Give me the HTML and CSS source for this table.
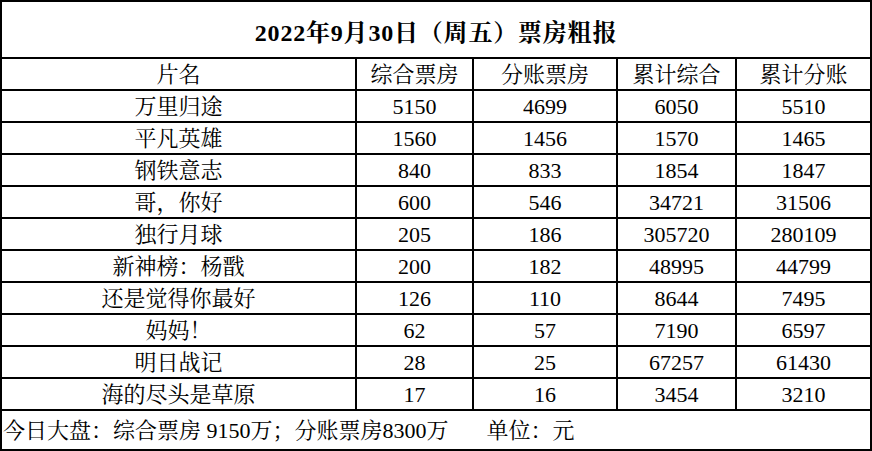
FILE: index.html
```html
<!DOCTYPE html>
<html lang="zh-CN">
<head>
<meta charset="utf-8">
<title>票房粗报</title>
<link rel="stylesheet" href="styles.css">
</head>
<body>
<div class="sheet">
  <div class="cell title">2022年9月30日（周五）票房粗报</div>
  <div class="cell head">片名</div>
  <div class="cell head">综合票房</div>
  <div class="cell head">分账票房</div>
  <div class="cell head">累计综合</div>
  <div class="cell head">累计分账</div>

  <div class="cell">万里归途</div><div class="cell">5150</div><div class="cell">4699</div><div class="cell">6050</div><div class="cell">5510</div>
  <div class="cell">平凡英雄</div><div class="cell">1560</div><div class="cell">1456</div><div class="cell">1570</div><div class="cell">1465</div>
  <div class="cell">钢铁意志</div><div class="cell">840</div><div class="cell">833</div><div class="cell">1854</div><div class="cell">1847</div>
  <div class="cell">哥，你好</div><div class="cell">600</div><div class="cell">546</div><div class="cell">34721</div><div class="cell">31506</div>
  <div class="cell">独行月球</div><div class="cell">205</div><div class="cell">186</div><div class="cell">305720</div><div class="cell">280109</div>
  <div class="cell">新神榜：杨戬</div><div class="cell">200</div><div class="cell">182</div><div class="cell">48995</div><div class="cell">44799</div>
  <div class="cell">还是觉得你最好</div><div class="cell">126</div><div class="cell">110</div><div class="cell">8644</div><div class="cell">7495</div>
  <div class="cell">妈妈！</div><div class="cell">62</div><div class="cell">57</div><div class="cell">7190</div><div class="cell">6597</div>
  <div class="cell">明日战记</div><div class="cell">28</div><div class="cell">25</div><div class="cell">67257</div><div class="cell">61430</div>
  <div class="cell">海的尽头是草原</div><div class="cell">17</div><div class="cell">16</div><div class="cell">3454</div><div class="cell">3210</div>

  <div class="cell foot"><span>今日大盘：综合票房 9150万；分账票房8300万</span><span class="unit">单位：元</span></div>
</div>
</body>
</html>
```
FILE: styles.css
```css
html, body {
  margin: 0;
  padding: 0;
  background: #fff;
}
.sheet {
  display: grid;
  grid-template-columns: 353px 115px 142px 117px 133px;
  grid-template-rows: 55px 30px repeat(10, 30px) 38px;
  gap: 2px;
  padding: 2px;
  width: 872px;
  box-sizing: border-box;
  background: #000;
  font-family: "Liberation Serif", "Noto Serif CJK SC", "Noto Sans CJK SC", serif;
  font-size: 22px;
  color: #000;
}
.cell {
  background: #fff;
  display: flex;
  align-items: center;
  justify-content: center;
  line-height: 30px;
  white-space: nowrap;
  padding-top: 2px;
  box-sizing: border-box;
}
.title {
  grid-column: 1 / -1;
  font-size: 24px;
  font-weight: bold;
  letter-spacing: 0.8px;
  padding-top: 6px;
}
.foot {
  grid-column: 1 / -1;
  justify-content: flex-start;
  padding-left: 1px;
}
.unit {
  margin-left: 38px;
}
```
